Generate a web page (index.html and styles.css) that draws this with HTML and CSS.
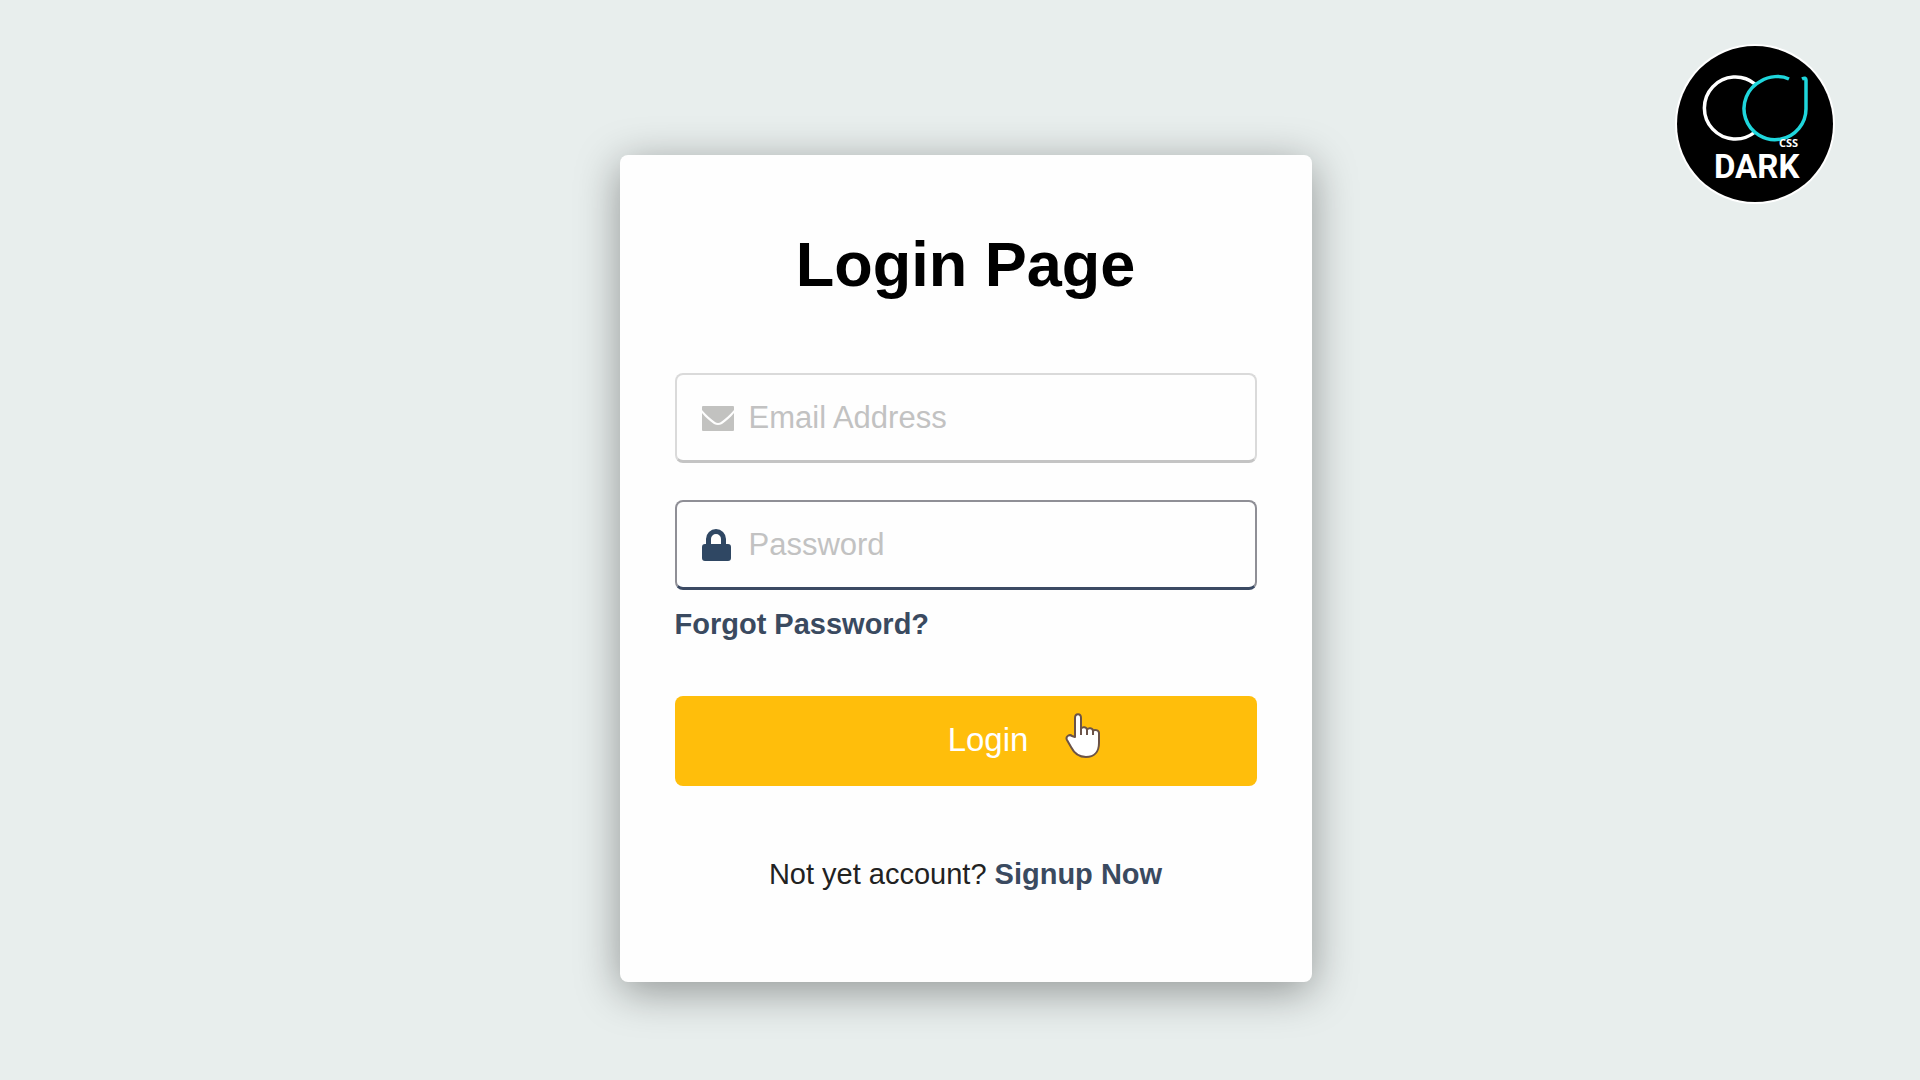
FILE: index.html
```html
<!DOCTYPE html>
<html lang="en">
<head>
  <meta charset="utf-8">
  <meta name="viewport" content="width=device-width, initial-scale=1">
  <title>Login Page</title>
  <link rel="stylesheet" href="styles.css">
</head>
<body>
  <svg class="logo" viewBox="0 0 160 160" role="img" aria-label="CSS Dark">
    <circle cx="80" cy="80" r="80" fill="#fff"/>
    <circle cx="80" cy="80" r="78" fill="#000"/>
    <path d="M80 40 A31 31 0 1 0 80 88" fill="none" stroke="#fff" stroke-width="3.5"/>
    <path d="M114 35 C106 31 94 32 86 37 A31 31 0 1 0 131 64 V36 Q131 33 127 35" fill="none" stroke="#1fd6dc" stroke-width="3.5"/>
    <text class="logo-small" x="104" y="103">CSS</text>
    <text class="logo-name" x="39" y="134">DARK</text>
  </svg>

  <main class="page">
    <form class="card">
      <h1 class="title">Login Page</h1>

      <div class="fields">
        <label class="field">
          <svg class="field-icon" viewBox="0 0 34 34" aria-hidden="true">
            <path fill="currentColor" d="M2 5H32Q33 5 33 6V9C29 14 24 18 20 21Q17 23 14 21C10 18 5 14 1 9V6Q1 5 2 5ZM1 12C5 17 9 20 13 23Q17 25 21 23C25 20 29 17 33 12V29Q33 30 32 30H2Q1 30 1 29Z"/>
          </svg>
          <input class="input" type="email" name="email" placeholder="Email Address" aria-label="Email Address">
        </label>
        <label class="field field-active">
          <svg class="field-icon" viewBox="0 0 34 34" aria-hidden="true">
            <path fill="currentColor" d="M5 16V11A10 10 0 0 1 25 11V16H27Q30 16 30 19V30Q30 33 27 33H4Q1 33 1 30V19Q1 16 4 16ZM10 16H20V11A5 5 0 0 0 10 11Z"/>
          </svg>
          <input class="input" type="password" name="password" placeholder="Password" aria-label="Password">
        </label>
      </div>

      <p class="forgot"><a class="link" href="#">Forgot Password?</a></p>

      <button class="submit" type="button">
        Login
        <svg class="pointer" viewBox="0 0 36 46" aria-hidden="true">
          <path d="M10 24V5c0-5 6-5 6 0v11c1-3 6-2 6 1 1-3 6-2 6 1 1-2 6-1 6 2v10c0 9-5 14-13 14-8 0-12-4-15-10L2 27c-2-4 3-6 5-4z" fill="#fff" stroke="#6b5348" stroke-width="2" stroke-linejoin="round"/>
          <path d="M16 15v7M22 17v5M28 18v4" fill="none" stroke="#6b5348" stroke-width="2"/>
        </svg>
      </button>

      <p class="signup">Not yet account? <a class="link" href="#">Signup Now</a></p>
    </form>
  </main>
</body>
</html>
```
FILE: styles.css
```css
* {
  box-sizing: border-box;
}

body {
  margin: 0;
  min-height: 100vh;
  background: #e8eeed;
  color: #222;
  font-family: "Liberation Sans", Arial, sans-serif;
  font-size: 29px;
  line-height: 36px;
}

.logo {
  position: absolute;
  top: 44px;
  right: 85px;
  width: 160px;
  height: 160px;
}

.logo-small {
  fill: #fff;
  font: 700 11px "Open Sans", sans-serif;
}

.logo-name {
  fill: #fff;
  font: 700 33px "Roboto", sans-serif;
}

.page {
  display: flex;
  justify-content: center;
  padding: 155px 0 98px 11px;
}

.card {
  width: 100%;
  max-width: 692px;
  padding: 73px 55px 90px;
  border-radius: 8px;
  background: #fefefe;
  box-shadow: 0 9px 44px rgba(0, 0, 0, 0.38);
}

.title {
  margin: 0 0 73px;
  color: #000;
  font-size: 63px;
  line-height: 72px;
  text-align: center;
}

.fields {
  display: grid;
  gap: 37px;
}

.field {
  display: flex;
  align-items: center;
  gap: 14px;
  height: 90px;
  padding: 0 24px;
  border: 2px solid #dadada;
  border-bottom: 3px solid #c4c4c4;
  border-radius: 8px;
  color: #c2c2c0;
}

.field-active {
  border-color: #8f8f96;
  border-bottom-color: #3b4a63;
  color: #2f4763;
}

.field-icon {
  flex: none;
  width: 34px;
  height: 34px;
}

.input {
  flex: 1;
  min-width: 0;
  padding: 0;
  border: 0;
  outline: 0;
  background: none;
  color: #222;
  font: inherit;
  font-size: 31px;
}

.input::placeholder {
  color: #c2c2c2;
  opacity: 1;
}

.link {
  color: #3a4a60;
  font-weight: 700;
  text-decoration: none;
}

.forgot {
  margin: 16px 0 54px;
}

.submit {
  position: relative;
  display: block;
  width: 100%;
  height: 90px;
  padding: 0 0 3px 45px;
  border: 0;
  border-radius: 8px;
  background: #ffbe0b;
  color: #fff;
  font: inherit;
  font-size: 33px;
  cursor: pointer;
}

.pointer {
  position: absolute;
  top: 17px;
  right: 156px;
  width: 36px;
  height: 46px;
}

.signup {
  margin: 70px 0 0;
  text-align: center;
}
```
